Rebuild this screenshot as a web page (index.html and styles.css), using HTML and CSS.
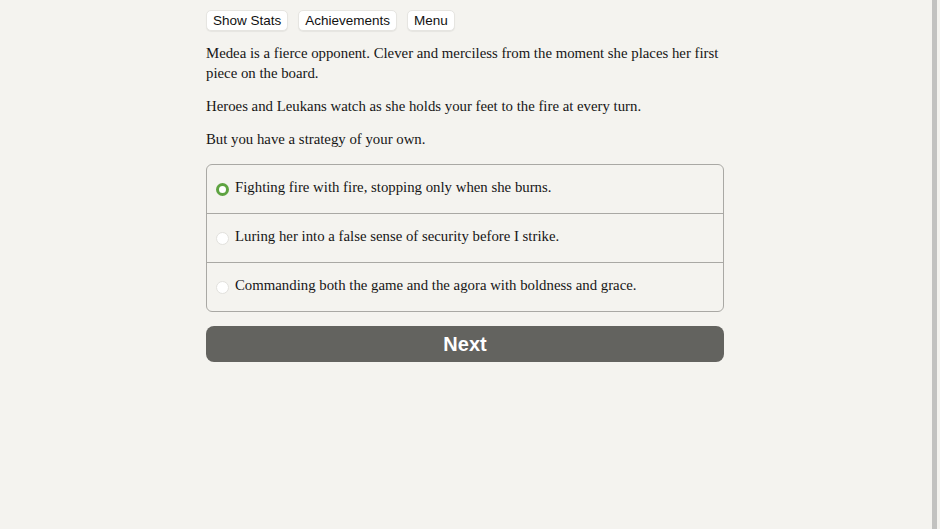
FILE: index.html
```html
<!DOCTYPE html>
<html lang="en">
<head>
<meta charset="utf-8">
<title>Medea</title>
<link rel="stylesheet" href="styles.css">
</head>
<body>
<div class="container">
  <div class="header-buttons">
    <button class="spacedLink">Show Stats</button>
    <button class="spacedLink">Achievements</button>
    <button class="spacedLink">Menu</button>
  </div>
  <div class="text">
    <p>Medea is a fierce opponent. Clever and merciless from the moment she places her first piece on the board.</p>
    <p>Heroes and Leukans watch as she holds your feet to the fire at every turn.</p>
    <p>But you have a strategy of your own.</p>
  </div>
  <form class="choice">
    <label class="option">
      <span class="radio checked"></span>
      <span class="option-text">Fighting fire with fire, stopping only when she burns.</span>
    </label>
    <label class="option">
      <span class="radio"></span>
      <span class="option-text">Luring her into a false sense of security before I strike.</span>
    </label>
    <label class="option">
      <span class="radio"></span>
      <span class="option-text">Commanding both the game and the agora with boldness and grace.</span>
    </label>
  </form>
  <button class="next">Next</button>
</div>
<div class="scrollbar"></div>
</body>
</html>
```
FILE: styles.css
```css
html, body {
  margin: 0;
  padding: 0;
  background: #f4f3ef;
}

body {
  font-family: "Liberation Serif", serif;
  color: #161616;
}

.container {
  width: 518px;
  margin: 0 auto;
  padding-top: 10px;
  position: relative;
  left: -5px;
}

.header-buttons {
  display: flex;
  gap: 10px;
}

.spacedLink {
  font-family: "Liberation Sans", Arial, sans-serif;
  font-size: 13.5px;
  color: #111;
  background: #fff;
  border: 1px solid #e6e5e1;
  border-radius: 5px;
  padding: 0 6px;
  height: 21px;
  line-height: 19px;
  box-shadow: 0 1px 1px rgba(0, 0, 0, 0.06);
}

.text {
  margin-top: 12px;
  font-size: 14.8px;
  line-height: 20px;
}

.text p {
  margin: 0 0 13px 0;
}

.choice {
  margin-top: 15px;
  border: 1px solid #a9a8a4;
  border-radius: 6px;
  display: flex;
  flex-direction: column;
}

.option {
  display: flex;
  align-items: center;
  height: 48px;
  box-sizing: border-box;
  padding: 0 0 3px 9px;
  gap: 6px;
  font-size: 14.8px;
}

.option + .option {
  height: 49px;
  border-top: 1px solid #a9a8a4;
}

.radio {
  width: 13px;
  height: 13px;
  border-radius: 50%;
  background: #fff;
  border: 1px solid #e2e1dd;
  box-sizing: border-box;
  margin-top: 3px;
}

.radio.checked {
  background: #fff;
  border: 3.5px solid #5ea341;
}

.next {
  display: block;
  width: 100%;
  margin-top: 14px;
  height: 36px;
  border: none;
  border-radius: 8px;
  background: #63635f;
  color: #fff;
  font-family: "Liberation Sans", Arial, sans-serif;
  font-weight: bold;
  font-size: 20px;
}

.scrollbar {
  position: fixed;
  top: 0;
  right: 3px;
  width: 5px;
  height: 100%;
  background: #c2c2c0;
}
```
